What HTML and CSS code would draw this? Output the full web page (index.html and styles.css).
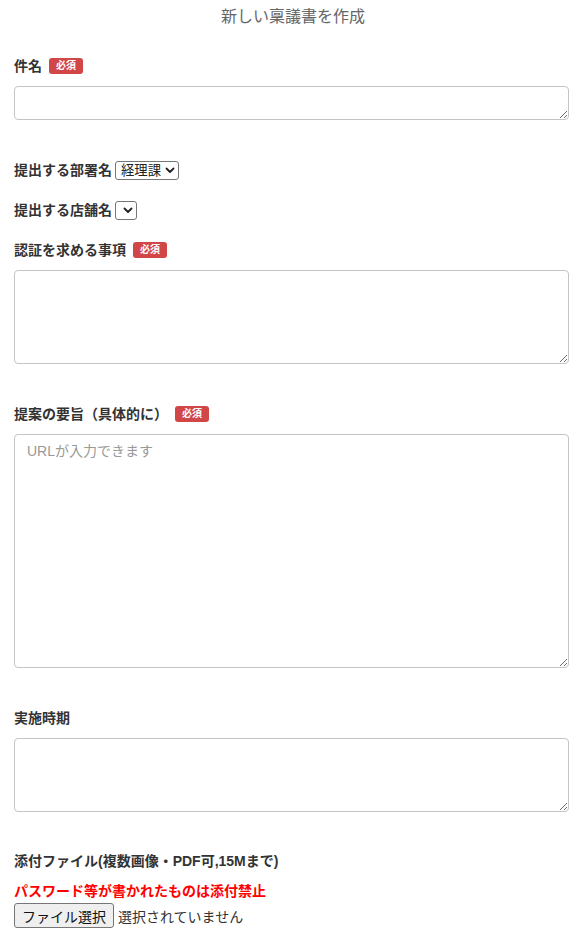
FILE: index.html
```html
<!DOCTYPE html>
<html lang="ja">
<head>
<meta charset="utf-8">
<title>新しい稟議書を作成</title>
<link rel="stylesheet" href="styles.css">
</head>
<body>
<div class="page">
  <h1 class="title">新しい稟議書を作成</h1>
  <form class="form">
    <div class="group group-first">
      <div class="label">件名<span class="badge">必須</span></div>
      <textarea class="field h-34"></textarea>
    </div>

    <div class="row row-first">
      <span class="label-inline">提出する部署名</span>
      <span class="select-wrap">
        <select class="select"><option>経理課</option></select>
        <svg class="chev" width="10" height="7" viewBox="0 0 10 7"><path d="M1.5 1.5 L5 5 L8.5 1.5" fill="none" stroke="#222" stroke-width="1.8" stroke-linecap="round" stroke-linejoin="round"/></svg>
      </span>
    </div>
    <div class="row">
      <span class="label-inline">提出する店舗名</span>
      <span class="select-wrap">
        <select class="select select-empty"><option></option></select>
        <svg class="chev" width="10" height="7" viewBox="0 0 10 7"><path d="M1.5 1.5 L5 5 L8.5 1.5" fill="none" stroke="#222" stroke-width="1.8" stroke-linecap="round" stroke-linejoin="round"/></svg>
      </span>
    </div>

    <div class="group group-after-row">
      <div class="label">認証を求める事項<span class="badge">必須</span></div>
      <textarea class="field h-94"></textarea>
    </div>

    <div class="group">
      <div class="label">提案の要旨（具体的に）<span class="badge">必須</span></div>
      <textarea class="field h-234" placeholder="URLが入力できます"></textarea>
    </div>

    <div class="group">
      <div class="label">実施時期</div>
      <textarea class="field h-74"></textarea>
    </div>

    <div class="group group-file">
      <div class="label">添付ファイル(複数画像・PDF可,15Mまで)</div>
      <div class="warn">パスワード等が書かれたものは添付禁止</div>
      <div class="file">
        <button type="button" class="file-btn">ファイル選択</button>
        <span class="file-text">選択されていません</span>
      </div>
    </div>
  </form>
</div>
</body>
</html>
```

FILE: styles.css
```css
* { box-sizing: border-box; }

body {
  margin: 0;
  background: #fff;
  font-family: "Liberation Sans", "Noto Sans CJK JP", sans-serif;
  color: #333;
}

.page {
  padding: 0 17px 0 14px;
}

.title {
  margin: 5px 0 0;
  font-size: 16px;
  line-height: 24px;
  font-weight: normal;
  color: #666;
  text-align: center;
  margin-left: -14px;
  margin-right: -17px;
}

.form {
  display: flex;
  flex-direction: column;
}

.group {
  display: flex;
  flex-direction: column;
  margin-top: 40px;
}

.group-first { margin-top: 27px; }
.group-after-row { margin-top: 20px; }
.group-file { margin-top: 39px; }

.label {
  display: flex;
  align-items: center;
  font-size: 14px;
  line-height: 20px;
  font-weight: bold;
  color: #333;
  margin-bottom: 10px;
}

.badge {
  display: inline-block;
  margin-left: 7px;
  padding: 0 7px;
  height: 16px;
  line-height: 16px;
  font-size: 10px;
  font-weight: bold;
  color: #fff;
  background: #d14646;
  border-radius: 3px;
}

.field {
  display: block;
  width: 100%;
  border: 1px solid #c4c4c4;
  border-radius: 4px;
  padding: 6px 12px;
  font-family: "Liberation Sans", "Noto Sans CJK JP", sans-serif;
  font-size: 14px;
  line-height: 20px;
  color: #333;
  background: #fff;
  resize: vertical;
  margin: 0;
}

.field::placeholder { color: #999; }

.h-34 { height: 34px; }
.h-94 { height: 94px; }
.h-234 { height: 234px; }
.h-74 { height: 74px; }

.row {
  display: flex;
  align-items: center;
  height: 20px;
  margin-top: 20px;
}

.row-first { margin-top: 40px; }

.label-inline {
  font-size: 14px;
  line-height: 20px;
  font-weight: bold;
  color: #333;
}

.select-wrap {
  position: relative;
  display: inline-flex;
  margin-left: 3px;
}

.select {
  -webkit-appearance: none;
  appearance: none;
  height: 19px;
  border: 1px solid #767676;
  border-radius: 3px;
  background: #fff;
  padding: 0 17px 0 5px;
  font-family: "Liberation Sans", "Noto Sans CJK JP", sans-serif;
  font-size: 13.33px;
  line-height: 17px;
  color: #222;
  margin: 0;
}

.select-empty {
  width: 22px;
  padding: 0;
}

.chev {
  position: absolute;
  right: 4px;
  top: 6px;
  pointer-events: none;
}

.warn {
  font-size: 14px;
  line-height: 20px;
  font-weight: bold;
  color: #f00;
}

.file {
  display: flex;
  align-items: center;
  margin-top: 2px;
}

.file-btn {
  height: 25px;
  padding: 0 7px;
  border: 1px solid #767676;
  border-radius: 3px;
  background: #efefef;
  font-family: "Liberation Sans", "Noto Sans CJK JP", sans-serif;
  font-size: 14px;
  color: #111;
  margin: 0;
}

.file-text {
  margin-left: 4px;
  font-size: 14px;
  color: #333;
}
```
